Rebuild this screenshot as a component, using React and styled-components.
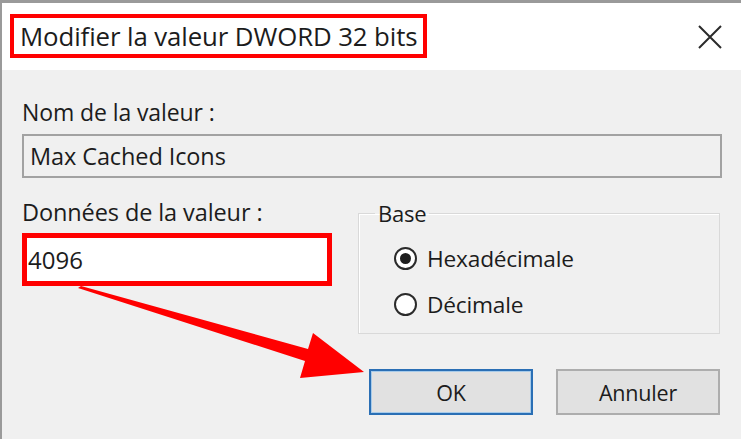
import React from "react";
import styled, { createGlobalStyle } from "styled-components";

const GlobalStyle = createGlobalStyle`
  html, body {
    margin: 0;
    padding: 0;
    background: #f0f0f0;
  }
  body {
    font-family: "Open Sans", "Noto Sans", "Liberation Sans", sans-serif;
    color: #1c1c1c;
  }
`;

const Window = styled.div`
  position: relative;
  width: 741px;
  height: 439px;
  box-sizing: border-box;
  border-top: 3px solid #9a9a9a;
  border-left: 2px solid #9a9a9a;
  background: #f0f0f0;
  display: flex;
  flex-direction: column;
  overflow: hidden;
`;

const TitleBar = styled.div`
  height: 67px;
  background: #ffffff;
  display: flex;
  align-items: center;
  justify-content: space-between;
  padding: 0 19px 0 8px;
  flex-shrink: 0;
`;

const Title = styled.span`
  border: 4px solid #ff0000;
  height: 44px;
  box-sizing: border-box;
  padding: 0 5px 0 6px;
  display: flex;
  align-items: center;
  font-size: 25.8px;
  letter-spacing: -0.1px;
  margin-top: -2px;
`;

const CloseIcon = () => (
  <svg width="24" height="24" viewBox="0 0 24 24">
    <path d="M1 1 L23 23 M23 1 L1 23" stroke="#2a2a2a" strokeWidth="2" />
  </svg>
);

const Body = styled.div`
  flex: 1;
  padding: 30px 19px 0 20px;
  display: flex;
  flex-direction: column;
`;

const Label = styled.div`
  font-size: ${(p) => (p.$wide ? "23.5px" : "23px")};
  line-height: 24px;
  height: 24px;
  letter-spacing: -0.1px;
`;

const ReadOnlyField = styled.div`
  margin-top: 10px;
  height: 44px;
  box-sizing: border-box;
  border: 2px solid #a2a2a2;
  background: #f0f0f0;
  font-size: 23.5px;
  letter-spacing: -0.1px;
  display: flex;
  align-items: center;
  padding-left: 6px;
`;

const Row = styled.div`
  margin-top: 22px;
  display: grid;
  grid-template-columns: 310px 362px;
  column-gap: 26px;
  align-items: start;
`;

const Column = styled.div`
  display: flex;
  flex-direction: column;
`;

const ValueField = styled.div`
  margin-top: 9px;
  height: 53px;
  box-sizing: border-box;
  border: 5px solid #ff0000;
  background: #ffffff;
  font-size: 24px;
  display: flex;
  align-items: center;
  padding-left: 1px;
`;

const GroupBox = styled.fieldset`
  margin: 1px 0 0 0;
  height: 133px;
  box-sizing: border-box;
  border: 1px solid #d9d9d9;
  box-shadow: inset 1px 1px 0 #ffffff;
  padding: 0 0 0 35px;
  display: flex;
  flex-direction: column;
`;

const Legend = styled.legend`
  font-size: 22px;
  line-height: 24px;
  padding: 0 3px;
  margin-left: -19px;
  letter-spacing: -0.2px;
`;

const RadioRow = styled.label`
  display: flex;
  align-items: center;
  gap: 10px;
  height: 46px;
  font-size: 22.7px;
  letter-spacing: -0.2px;
  margin-top: ${(p) => (p.$first ? "10px" : "0")};
`;

const RadioCircle = styled.span`
  width: 23px;
  height: 23px;
  box-sizing: border-box;
  border-radius: 50%;
  border: 2px solid #2b2b2b;
  background: #ffffff;
  display: flex;
  align-items: center;
  justify-content: center;
  &::after {
    content: "";
    width: 11px;
    height: 11px;
    border-radius: 50%;
    background: ${(p) => (p.$checked ? "#1e1e1e" : "transparent")};
  }
`;

const ButtonRow = styled.div`
  margin-top: 35px;
  display: flex;
  justify-content: flex-end;
  gap: 23px;
  padding-right: 2px;
`;

const Button = styled.button`
  width: 164px;
  height: 46px;
  box-sizing: border-box;
  background: #e1e1e1;
  border: 2px solid ${(p) => (p.$primary ? "#2a6fb5" : "#adadad")};
  box-shadow: ${(p) => (p.$primary ? "inset 0 0 0 1px #a7cbea" : "none")};
  font-family: inherit;
  font-size: 21.5px;
  letter-spacing: -0.2px;
  color: #1c1c1c;
  padding: 0;
`;

const Overlay = styled.svg`
  position: absolute;
  left: -2px;
  top: -3px;
  pointer-events: none;
`;

const Arrow = () => (
  <Overlay width="741" height="439" viewBox="0 0 741 439">
    <polygon
      points="78,288 81,286 308,349 313,333 364,372 300,378 305,361"
      fill="#ff0000"
    />
  </Overlay>
);

const App = () => {
  return (
    <>
      <GlobalStyle />
      <Window>
        <TitleBar>
          <Title>Modifier la valeur DWORD 32 bits</Title>
          <CloseIcon />
        </TitleBar>
        <Body>
          <Label>Nom de la valeur :</Label>
          <ReadOnlyField>Max Cached Icons</ReadOnlyField>
          <Row>
            <Column>
              <Label $wide>Données de la valeur :</Label>
              <ValueField>4096</ValueField>
            </Column>
            <GroupBox>
              <Legend>Base</Legend>
              <RadioRow $first>
                <RadioCircle $checked />
                Hexadécimale
              </RadioRow>
              <RadioRow>
                <RadioCircle />
                Décimale
              </RadioRow>
            </GroupBox>
          </Row>
          <ButtonRow>
            <Button $primary>OK</Button>
            <Button>Annuler</Button>
          </ButtonRow>
        </Body>
        <Arrow />
      </Window>
    </>
  );
};

export default App;
